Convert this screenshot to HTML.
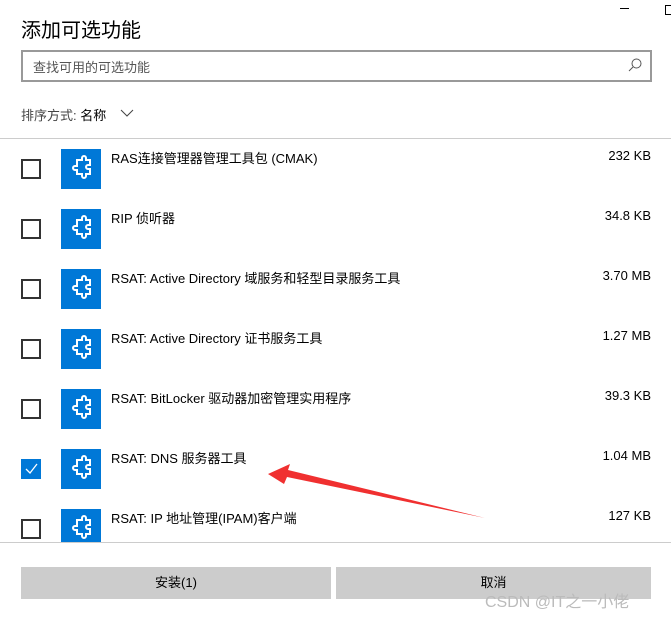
<!DOCTYPE html>
<html style="overflow:hidden;width:671px;height:617px"><head><meta charset="utf-8"><style>
body{margin:0;width:671px;height:617px;background:#fff;position:relative;overflow:hidden;font-family:"Liberation Sans","Noto Sans CJK SC",sans-serif;color:#000}
.a{position:absolute}
.cb{position:absolute;left:21px;width:16px;height:16px;border:2px solid #333}
.ic{position:absolute;left:61px;width:40px;height:40px;background:#0078d7}
.t{position:absolute;left:111px;font-size:13px}
.s{position:absolute;right:20px;font-size:13px}
.btn{position:absolute;top:567px;height:32px;background:#ccc;font-size:13px;text-align:center;line-height:32px}
</style></head><body>
<div class="a" style="left:620px;top:8px;width:9px;height:1px;background:#000"></div>
<div class="a" style="left:665px;top:5px;width:8px;height:8px;border:1px solid #000"></div>
<div class="a" style="left:21px;top:14px;font-size:20px">添加可选功能</div>
<div class="a" style="left:21px;top:50px;width:627px;height:28px;border:2px solid #999"></div>
<div class="a" style="left:33px;top:57px;font-size:13px;color:#555">查找可用的可选功能</div>
<svg class="a" style="left:628px;top:58px" width="14" height="14"><circle cx="8.5" cy="5.5" r="4.5" fill="none" stroke="#555"/><line x1="5" y1="9" x2="1" y2="13" stroke="#555"/></svg>
<div class="a" style="left:21px;top:105px;font-size:13px;color:#444">排序方式: <span style="color:#000">名称</span></div>
<svg class="a" style="left:120px;top:109px" width="14" height="9"><polyline points="1,1 7,7 13,1" fill="none" stroke="#444"/></svg>
<div class="a" style="left:0;top:138px;width:671px;height:1px;background:#ccc"></div>
<div class="a" style="left:0;top:139px;width:671px;height:403px;overflow:hidden">
<div style="position:absolute;left:0;top:-139px;width:671px;height:542px">
<script>
var d=[["RAS连接管理器管理工具包 (CMAK)","232 KB"],["RIP 侦听器","34.8 KB"],["RSAT: Active Directory 域服务和轻型目录服务工具","3.70 MB"],["RSAT: Active Directory 证书服务工具","1.27 MB"],["RSAT: BitLocker 驱动器加密管理实用程序","39.3 KB"],["RSAT: DNS 服务器工具","1.04 MB"],["RSAT: IP 地址管理(IPAM)客户端","127 KB"]];
var puz='<svg width="40" height="40" viewBox="0 0 40 40"><path d="M16 11h5v-2a2 2 0 0 1 4 0v2h4v5h-2a2 2 0 0 0 0 4h2v5h-4v2a2 2 0 0 1-4 0v-2h-5v-4h-2a2 2 0 0 1 0-4h2z" fill="none" stroke="#fff" stroke-width="2"/></svg>';
for(var i=0;i<d.length;i++){var y=149+60*i;
document.write('<div class="ic" style="top:'+y+'px">'+puz+'</div>');
if(i==5)document.write('<div class="cb" style="top:'+(y+10)+'px;background:#0078d7;border-color:#0078d7"><svg width="16" height="16"><polyline points="3,8 7,12 14,3" fill="none" stroke="#fff" stroke-width="1.3"/></svg></div>');
else document.write('<div class="cb" style="top:'+(y+10)+'px"></div>');
document.write('<div class="t" style="top:'+(y-1)+'px">'+d[i][0]+'</div><div class="s" style="top:'+(y-1)+'px">'+d[i][1]+'</div>');}
</script>
</div></div>
<svg class="a" style="left:0;top:0" width="671" height="617"><polygon points="485,518 288,470 290,464 268,474 284,484 287,477" fill="#f03030"/></svg>
<div class="a" style="left:0;top:542px;width:671px;height:1px;background:#ccc"></div>
<div class="btn" style="left:21px;width:310px">安装(1)</div>
<div class="btn" style="left:336px;width:315px">取消</div>
<div class="a" style="left:485px;top:588px;font-size:16px;color:#bbb;white-space:nowrap">CSDN @IT之一小佬</div>
</body></html>
